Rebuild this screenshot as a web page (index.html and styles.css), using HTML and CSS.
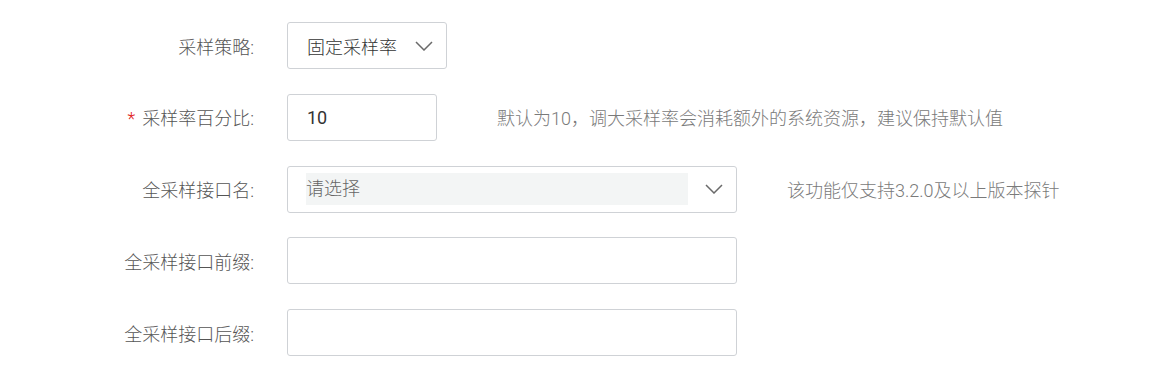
FILE: index.html
```html
<!DOCTYPE html>
<html lang="zh">
<head>
<meta charset="utf-8">
<link rel="stylesheet" href="styles.css">
</head>
<body>
<form class="form">
  <div class="row">
    <label class="label">采样策略:</label>
    <div class="control select small">
      <span class="value">固定采样率</span>
      <svg class="chev" width="18" height="10" viewBox="0 0 18 10"><path d="M1 1 L9 9 L17 1" fill="none" stroke="#6a6a6a" stroke-width="1.5"/></svg>
    </div>
  </div>
  <div class="row">
    <label class="label"><span class="req">*</span>采样率百分比:</label>
    <div class="control input tiny"><span class="value num">10</span></div>
    <span class="help help-a">默认为10，调大采样率会消耗额外的系统资源，建议保持默认值</span>
  </div>
  <div class="row">
    <label class="label">全采样接口名:</label>
    <div class="control select wide">
      <span class="placeholder">请选择</span>
      <svg class="chev" width="18" height="10" viewBox="0 0 18 10"><path d="M1 1 L9 9 L17 1" fill="none" stroke="#6a6a6a" stroke-width="1.5"/></svg>
    </div>
    <span class="help help-b">该功能仅支持3.2.0及以上版本探针</span>
  </div>
  <div class="row">
    <label class="label">全采样接口前缀:</label>
    <div class="control input wide"></div>
  </div>
  <div class="row">
    <label class="label">全采样接口后缀:</label>
    <div class="control input wide"></div>
  </div>
</form>
</body>
</html>
```

FILE: styles.css
```css
html, body {
  margin: 0;
  padding: 0;
  background: #fff;
}
body {
  font-family: Roboto, "Noto Sans CJK SC", "Noto Sans", sans-serif;
  font-size: 18px;
  font-weight: 300;
  color: #333;
}
.form {
  display: flex;
  flex-direction: column;
  gap: 24.75px;
  padding-top: 22px;
}
.row {
  display: flex;
  align-items: center;
  height: 47px;
}
.label {
  width: 254px;
  text-align: right;
  color: #555;
  margin-right: 33px;
  flex: none;
}
.req {
  color: #e02020;
  margin-right: 7px;
}
.control {
  box-sizing: border-box;
  height: 47px;
  border: 1px solid #cfd2d6;
  border-radius: 3px;
  display: flex;
  align-items: center;
  flex: none;
}
.small { width: 160px; padding-left: 19px; }
.tiny { width: 150px; padding-left: 19px; }
.wide { width: 450px; }
.select { justify-content: space-between; padding-right: 13px; }
.value { color: #333; }
.num { font-weight: 400; }
.wide.select { padding-left: 18px; }
.placeholder {
  flex: 1;
  height: 32px;
  line-height: 32px;
  background: #f3f5f5;
  color: #666;
  margin-right: 17px;
}
.chev { flex: none; }
.help {
  color: #7a7a7a;
}
.help-a { margin-left: 60px; }
.help-b { margin-left: 50px; }
```
